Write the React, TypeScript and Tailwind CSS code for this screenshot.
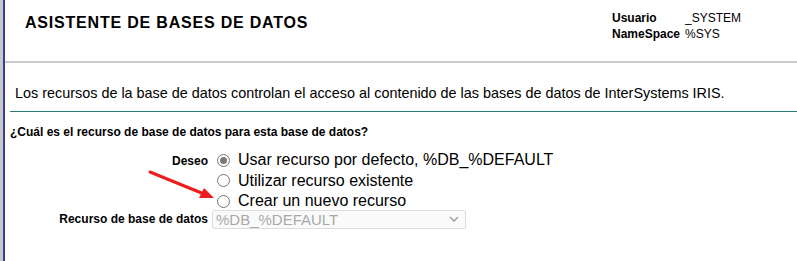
const options = [
  { id: 'default', label: 'Usar recurso por defecto, %DB_%DEFAULT', checked: true },
  { id: 'existing', label: 'Utilizar recurso existente', checked: false },
  { id: 'new', label: 'Crear un nuevo recurso', checked: false },
]

function Radio({ checked }: { checked: boolean }) {
  return (
    <span className="flex h-[13px] w-[13px] shrink-0 items-center justify-center rounded-full border border-[#767676] bg-white">
      {checked && <span className="h-[7px] w-[7px] rounded-full bg-[#7a7a7a]" />}
    </span>
  )
}

export default function App() {
  return (
    <div className="relative flex h-[261px] w-[797px] overflow-hidden bg-white font-['Liberation_Sans',Arial,sans-serif] text-black">
      {/* edge of the window behind */}
      <div className="w-[3px] shrink-0 bg-[#c9c9c9]" />
      <div className="w-[2px] shrink-0 bg-[#3c3c9e]" />

      <div className="flex min-w-0 flex-1 flex-col">
        <div className="flex h-[61px] items-start">
          <h1 className="ml-[20px] mt-[13px] text-[16px] font-bold leading-[20px] tracking-[0.8px]">
            ASISTENTE DE BASES DE DATOS
          </h1>
          <div className="ml-auto mr-[56px] mt-[10px] grid grid-cols-[73px_auto] text-[12px] leading-[16px]">
            <span className="font-bold">Usuario</span>
            <span>_SYSTEM</span>
            <span className="font-bold">NameSpace</span>
            <span>%SYS</span>
          </div>
        </div>
        <div className="h-[2px] bg-[#cccccc]" />

        <p className="ml-[10px] mt-[21px] text-[14.4px] leading-[18px]">
          Los recursos de la base de datos controlan el acceso al contenido de las bases de datos de InterSystems IRIS.
        </p>
        <div className="ml-[5px] mt-[9px] h-px bg-[#2e7d74]" />

        <p className="ml-[5px] mt-[13px] text-[12px] font-bold leading-[14px]">
          ¿Cuál es el recurso de base de datos para esta base de datos?
        </p>

        <div className="mt-[11px] grid grid-cols-[203px_auto] items-start gap-x-[9px]">
          <span className="pt-[4px] text-right text-[12px] font-bold leading-[14px]">Deseo</span>
          <div className="flex flex-col">
            {options.map((o) => (
              <label key={o.id} className="flex h-[20.5px] items-center gap-[8px] text-[16px]">
                <Radio checked={o.checked} />
                <span className="leading-[18px]">{o.label}</span>
              </label>
            ))}
          </div>

          <span className="-mt-[2px] pt-[2px] text-right text-[12px] font-bold leading-[14px]">Recurso de base de datos</span>
          <div className="-ml-[5px] -mt-[2px] flex h-[19px] w-[254px] items-center justify-between rounded-[2px] border border-[#dcdcdc] bg-[#fafafa] pl-[3px] pr-[6px] text-[15px] text-[#a9a9a9]">
            <span className="leading-[17px]">%DB_%DEFAULT</span>
            <svg width="10" height="6" viewBox="0 0 10 6" fill="none">
              <path d="M1 1l4 4 4-4" stroke="#a5a5a5" strokeWidth="1.6" />
            </svg>
          </div>
        </div>
      </div>

      {/* annotation arrow */}
      <svg className="pointer-events-none absolute left-0 top-0" width="797" height="261">
        <line x1="150" y1="172" x2="204" y2="194" stroke="#ee1c1c" strokeWidth="3" strokeLinecap="round" />
        <polygon points="214,198 199,198 204,188" fill="#ee1c1c" />
      </svg>
    </div>
  )
}
